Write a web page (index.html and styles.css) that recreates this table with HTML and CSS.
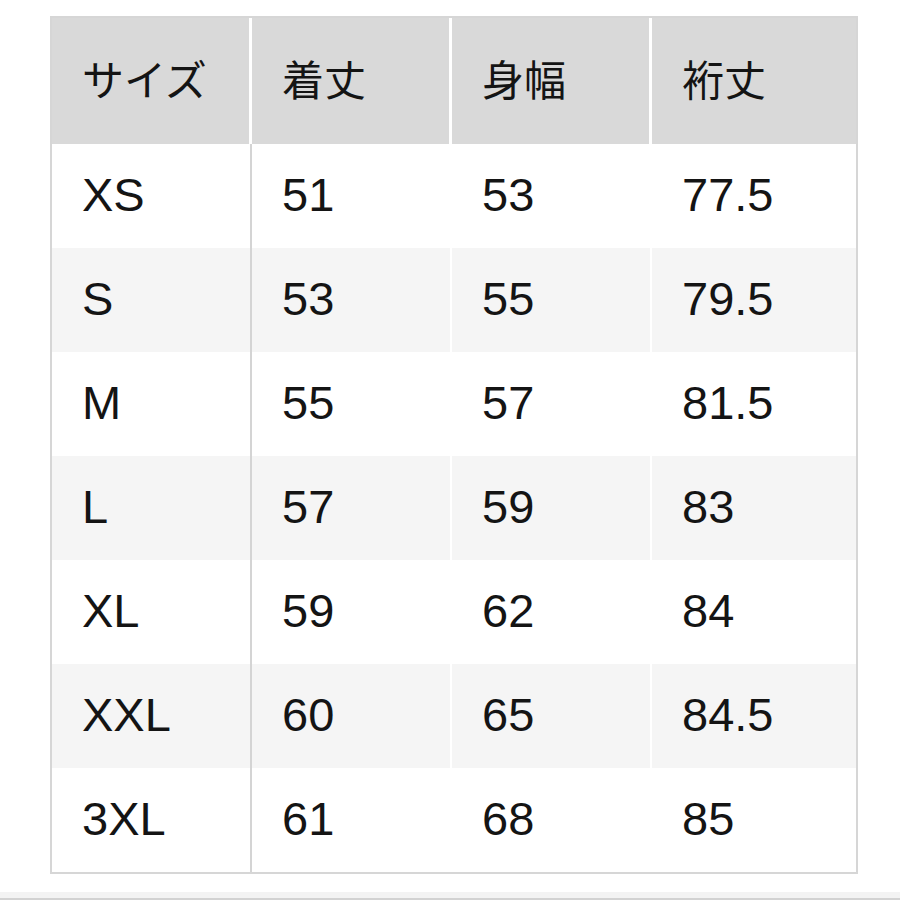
FILE: index.html
```html
<!DOCTYPE html>
<html lang="ja">
<head>
<meta charset="utf-8">
<link rel="stylesheet" href="styles.css">
</head>
<body>
<div class="table">
  <div class="row head">
    <div class="cell">サイズ</div>
    <div class="cell">着丈</div>
    <div class="cell">身幅</div>
    <div class="cell">裄丈</div>
  </div>
  <div class="row"><div class="cell">XS</div><div class="cell">51</div><div class="cell">53</div><div class="cell">77.5</div></div>
  <div class="row alt"><div class="cell">S</div><div class="cell">53</div><div class="cell">55</div><div class="cell">79.5</div></div>
  <div class="row"><div class="cell">M</div><div class="cell">55</div><div class="cell">57</div><div class="cell">81.5</div></div>
  <div class="row alt"><div class="cell">L</div><div class="cell">57</div><div class="cell">59</div><div class="cell">83</div></div>
  <div class="row"><div class="cell">XL</div><div class="cell">59</div><div class="cell">62</div><div class="cell">84</div></div>
  <div class="row alt"><div class="cell">XXL</div><div class="cell">60</div><div class="cell">65</div><div class="cell">84.5</div></div>
  <div class="row"><div class="cell">3XL</div><div class="cell">61</div><div class="cell">68</div><div class="cell">85</div></div>
</div>
<div class="strip"></div>
</body>
</html>
```

FILE: styles.css
```css
html, body {
  margin: 0;
  padding: 0;
  background: #ffffff;
}
body {
  width: 900px;
  height: 900px;
  overflow: hidden;
}
.table {
  margin: 16px 0 0 50px;
  width: 808px;
  box-sizing: border-box;
  border: 2px solid #d6d6d6;
  color: #141414;
}
.row {
  display: grid;
  grid-template-columns: 200px 200px 200px 204px;
  height: 104px;
  background: #ffffff;
}
.row.alt {
  background: #f5f5f5;
}
.row.head {
  height: 126px;
  background: #d9d9d9;
}
.cell {
  box-sizing: border-box;
  display: flex;
  align-items: center;
  padding-left: 30px;
  padding-bottom: 3px;
  font-family: "Liberation Sans", Arial, sans-serif;
  font-size: 47px;
  border-right: 2px solid #ffffff;
}
.cell:last-child {
  border-right: none;
}
.row .cell:first-child {
  border-right-color: #d4d4d4;
}
.row.head .cell {
  font-family: "Noto Sans CJK JP", "Noto Sans", sans-serif;
  font-size: 42px;
  padding-bottom: 8px;
  border-right: 3px solid #ffffff;
}
.row.head .cell:last-child {
  border-right: none;
}
.strip {
  margin-top: 18px;
  height: 6px;
  background: #f3f3f3;
  border-bottom: 2px solid #d2d2d2;
}
```
